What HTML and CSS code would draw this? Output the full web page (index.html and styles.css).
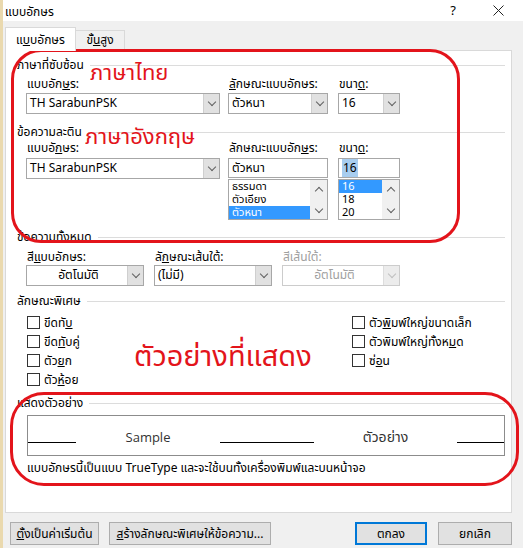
FILE: index.html
```html
<!DOCTYPE html>
<html lang="th">
<head>
    <meta charset="UTF-8">
    <meta name="viewport" content="width=device-width, initial-scale=1.0">
    <title>แบบอักษร</title>
    <link rel="stylesheet" href="styles.css">
</head>
<body>
    <div class="edge"></div>
    <div class="window">
        <div class="titlebar">
            <span class="title">แบบอักษร</span>
            <span class="help">?</span>
            <span class="close">
                <svg width="11" height="11" viewBox="0 0 11 11"><path d="M0.5 0.5 L10.5 10.5 M10.5 0.5 L0.5 10.5" stroke="#222" stroke-width="1" fill="none"/></svg>
            </span>
        </div>

        <div class="dialog">
            <div class="tabs">
                <div class="tab active">แ<u>บ</u>บอักษร</div>
                <div class="tab">ขั้<u>น</u>สูง</div>
            </div>

            <div class="panel">
                <div class="heading"><span>ภาษาที่ซับซ้อน</span></div>
                <div class="group g1">
                    <div class="col c-font">
                        <div class="label">แบบอัก<u>ษ</u>ร:</div>
                        <div class="combo"><span class="value">TH SarabunPSK</span><span class="drop"></span></div>
                    </div>
                    <div class="col c-style">
                        <div class="label"><u>ลั</u>กษณะแบบอักษร:</div>
                        <div class="combo"><span class="value">ตัวหนา</span><span class="drop"></span></div>
                    </div>
                    <div class="col c-size">
                        <div class="label">ขนา<u>ด</u>:</div>
                        <div class="combo"><span class="value">16</span><span class="drop"></span></div>
                    </div>
                </div>

                <div class="heading h2"><span>ข้อความละติน</span></div>
                <div class="group g2">
                    <div class="col c-font">
                        <div class="label">แบบอั<u>ก</u>ษร:</div>
                        <div class="combo edit"><span class="value">TH SarabunPSK</span><span class="drop"></span></div>
                    </div>
                    <div class="col c-style">
                        <div class="label">ลักษณะแบบอัก<u>ษ</u>ร:</div>
                        <div class="textbox">ตัวหนา</div>
                        <div class="listbox">
                            <div class="items">
                                <div class="item">ธรรมดา</div>
                                <div class="item">ตัวเอียง</div>
                                <div class="item selected">ตัวหนา</div>
                            </div>
                            <div class="scroll"><span class="arrow up"></span><span class="arrow down"></span></div>
                        </div>
                    </div>
                    <div class="col c-size">
                        <div class="label">ขนา<u>ด</u>:</div>
                        <div class="textbox"><span class="sel">16</span></div>
                        <div class="listbox">
                            <div class="items">
                                <div class="item selected">16</div>
                                <div class="item">18</div>
                                <div class="item">20</div>
                            </div>
                            <div class="scroll"><span class="arrow up"></span><span class="arrow down"></span></div>
                        </div>
                    </div>
                </div>

                <div class="heading h3"><span>ข้อความทั้งหมด</span></div>
                <div class="group g3">
                    <div class="col c-third">
                        <div class="label">สี<u>แ</u>บบอักษร:</div>
                        <div class="combo"><span class="value center">อัตโนมัติ</span><span class="drop"></span></div>
                    </div>
                    <div class="col c-third">
                        <div class="label">ลั<u>ก</u>ษณะเส้นใต้:</div>
                        <div class="combo"><span class="value">(ไม่มี)</span><span class="drop"></span></div>
                    </div>
                    <div class="col c-third">
                        <div class="label disabled">สีเส้นใต้:</div>
                        <div class="combo off"><span class="value center">อัตโนมัติ</span><span class="drop"></span></div>
                    </div>
                </div>

                <div class="heading h4"><span>ลักษณะพิเศษ</span></div>
                <div class="checks">
                    <div class="check-col left">
                        <div class="check"><span class="box"></span>ขีดทั<u>บ</u></div>
                        <div class="check"><span class="box"></span>ขีด<u>ทั</u>บคู่</div>
                        <div class="check"><span class="box"></span>ตัว<u>ย</u>ก</div>
                        <div class="check"><span class="box"></span>ตัว<u>ห้</u>อย</div>
                    </div>
                    <div class="check-col">
                        <div class="check"><span class="box"></span>ตัว<u>พิ</u>มพ์ใหญ่ขนาดเล็ก</div>
                        <div class="check"><span class="box"></span>ตัวพิมพ์ใหญ่ทั้งห<u>ม</u>ด</div>
                        <div class="check"><span class="box"></span>ซ่<u>อ</u>น</div>
                    </div>
                </div>

                <div class="heading h5"><span>แสดงตัวอย่าง</span></div>
                <div class="preview">
                    <span class="rule r1"></span>
                    <span class="sample latin">Sample</span>
                    <span class="rule r2"></span>
                    <span class="sample thai">ตัวอย่าง</span>
                    <span class="rule r3"></span>
                </div>
                <div class="note">แบบอักษรนี้เป็นแบบ TrueType และจะใช้บนทั้งเครื่องพิมพ์และบนหน้าจอ</div>
            </div>

            <div class="buttons">
                <button class="btn b-default"><u>ตั้</u>งเป็นค่าเริ่มต้น</button>
                <button class="btn b-effects"><u>ส</u>ร้างลักษณะพิเศษให้ข้อความ...</button>
                <button class="btn b-ok">ตกลง</button>
                <button class="btn b-cancel">ยกเลิก</button>
            </div>
        </div>
    </div>

    <!-- red annotations drawn over the dialog -->
    <div class="ring ring-top"></div>
    <div class="ring ring-bottom"></div>
    <div class="mark mark-thai">ภาษาไทย</div>
    <div class="mark mark-eng">ภาษาอังกฤษ</div>
    <div class="mark mark-preview">ตัวอย่างที่แสดง</div>
</body>
</html>
```

FILE: styles.css
```css
* {
    box-sizing: border-box;
}

body {
    margin: 0;
    width: 523px;
    height: 548px;
    overflow: hidden;
    display: flex;
    background-color: #f0f0f0;
    color: #000;
    font-family: Tahoma, "Leelawadee UI", "Noto Sans Thai", "Noto Sans Thai UI", Loma, Garuda, Waree, "DejaVu Sans", sans-serif;
    font-size: 12px;
    position: relative;
}

u {
    text-decoration: underline;
}

.edge {
    width: 3px;
    background-color: #ead9ae;
}

.window {
    flex: 1;
    display: flex;
    flex-direction: column;
}

.titlebar {
    height: 21px;
    background-color: #ffffff;
    display: flex;
    align-items: center;
    padding-left: 2px;
}

.title {
    flex: 1;
    padding-top: 2px;
}

.help {
    font-size: 13px;
    margin-right: 37px;
}

.close {
    display: flex;
    margin-right: 19px;
}

.dialog {
    flex: 1;
    padding: 0 11px 0 2px;
}

.tabs {
    display: flex;
    align-items: flex-end;
    margin-top: 6px;
    height: 23px;
}

.tab {
    height: 20px;
    width: 50px;
    border: 1px solid #d9d9d9;
    border-bottom: none;
    background-color: #f0f0f0;
    text-align: center;
    line-height: 19px;
    margin-left: -1px;
}

.tab.active {
    width: 71px;
    height: 24px;
    margin-left: 0;
    margin-bottom: -1px;
    background-color: #ffffff;
    position: relative;
    z-index: 1;
    line-height: 25px;
}

.panel {
    height: 463px;
    background-color: #ffffff;
    border: 1px solid #d9d9d9;
    padding: 7px 6px 0 11px;
}

.heading {
    height: 14px;
    display: flex;
    align-items: center;
    line-height: 14px;
}

.heading::after {
    content: "";
    flex: 1;
    height: 1px;
    background-color: #dcdcdc;
    margin-left: 6px;
}

.heading.h2 { margin-top: 11px; }
.heading.h3 { margin-top: 10px; }
.heading.h4 { margin-top: 8px; }
.heading.h5 { margin-top: 7px; }

.group {
    display: flex;
    margin-left: 9px;
}

.g1 { margin-top: 5px; }
.g2 { margin-top: 2px; }
.g3 { margin-top: 6px; }

.col {
    display: flex;
    flex-direction: column;
}

.c-font { width: 194px; }
.c-style { width: 100px; margin-left: 8px; }
.c-size { width: 62px; margin-left: 10px; }
.c-third { width: 118px; margin-right: 10px; }

.label {
    height: 14px;
    line-height: 14px;
    margin-bottom: 2px;
    padding-left: 1px;
}

.g3 .label {
    margin-bottom: 1px;
}

.g2 .label {
    margin-bottom: 3px;
}

.label.disabled {
    color: #a0a0a0;
}

.combo {
    height: 21px;
    display: flex;
    border: 1px solid #a7a7a7;
    background-color: #ffffff;
}

.combo .value {
    flex: 1;
    padding-left: 3px;
    line-height: 19px;
    white-space: nowrap;
    overflow: hidden;
}

.combo .value.center {
    text-align: center;
}

.combo .drop {
    width: 16px;
    background-color: #e1e1e1;
    border-left: 1px solid #cfcfcf;
    display: flex;
    align-items: center;
    justify-content: center;
}

.combo .drop::after {
    content: "";
    width: 5px;
    height: 5px;
    border-right: 1px solid #606060;
    border-bottom: 1px solid #606060;
    transform: translateY(-2px) rotate(45deg);
}

.combo.off {
    border-color: #cccccc;
    color: #a0a0a0;
}

.combo.off .drop {
    background-color: #ececec;
    border-left-color: #dddddd;
}

.combo.off .drop::after {
    border-color: #bfbfbf;
}

.textbox {
    height: 20px;
    border: 1px solid #a7a7a7;
    padding-left: 3px;
    line-height: 18px;
}

.textbox .sel {
    background-color: #a8cdef;
    padding: 0 1px;
}

.listbox {
    height: 41px;
    margin-top: 1px;
    border: 1px solid #a7a7a7;
    display: flex;
}

.listbox .items {
    flex: 1;
}

.item {
    height: 13px;
    line-height: 13px;
    font-size: 11px;
    padding-left: 3px;
}

.item.selected {
    background-color: #3399ff;
    color: #ffffff;
}

.scroll {
    width: 17px;
    background-color: #f0f0f0;
    display: flex;
    flex-direction: column;
    justify-content: space-between;
    align-items: center;
    padding: 6px 0 5px;
}

.arrow {
    width: 6px;
    height: 6px;
    border-left: 1.5px solid #606060;
    border-top: 1.5px solid #606060;
}

.arrow.up {
    transform: translateY(2px) rotate(45deg);
}

.arrow.down {
    transform: translateY(-2px) rotate(225deg);
}

.checks {
    display: flex;
    margin-top: 5px;
    margin-left: 10px;
}

.check-col.left {
    width: 325px;
}

.check {
    height: 19px;
    display: flex;
    align-items: center;
}

.check .box {
    width: 13px;
    height: 13px;
    border: 1px solid #333333;
    background-color: #ffffff;
    margin-right: 4px;
}

.preview {
    height: 41px;
    margin: 5px 0 0 10px;
    border: 1px solid #8c8c8c;
    display: flex;
    align-items: flex-start;
}

.rule {
    height: 27px;
    border-bottom: 1px solid #000;
}

.r1 { width: 48px; }
.r2 { width: 94px; }
.r3 { width: 47px; }

.sample {
    height: 39px;
    display: flex;
    align-items: center;
    justify-content: center;
    font-size: 14px;
    color: #333;
    padding-top: 3px;
}

.sample.latin {
    width: 144px;
    font-family: "Open Sans", sans-serif;
    font-size: 13px;
}

.sample.thai {
    width: 143px;
}

.note {
    margin: 5px 0 0 10px;
    height: 14px;
    line-height: 14px;
}

.buttons {
    display: flex;
    margin-top: 9px;
    padding-left: 5px;
}

.btn {
    height: 23px;
    font: inherit;
    color: #000;
    background-color: #e1e1e1;
    border: 1px solid #adadad;
    padding: 0;
}

.b-default { width: 89px; }
.b-effects { width: 162px; margin-left: 10px; }
.b-ok { width: 72px; margin-left: auto; border: 2px solid #0078d7; }
.b-cancel { width: 74px; margin-left: 11px; }

.ring {
    position: absolute;
    border: 3px solid #e3141b;
    border-radius: 30px;
    pointer-events: none;
}

.ring-top {
    left: 11px;
    top: 49px;
    width: 449px;
    height: 194px;
}

.ring-bottom {
    left: 10px;
    top: 392px;
    width: 509px;
    height: 94px;
    border-radius: 34px;
}

.mark {
    position: absolute;
    color: #e3141b;
    white-space: nowrap;
    line-height: 1;
}

.mark-thai {
    left: 90px;
    top: 63px;
    font-size: 22px;
}

.mark-eng {
    left: 85px;
    top: 127px;
    font-size: 22px;
}

.mark-preview {
    left: 134px;
    top: 343px;
    font-size: 29px;
}
```
